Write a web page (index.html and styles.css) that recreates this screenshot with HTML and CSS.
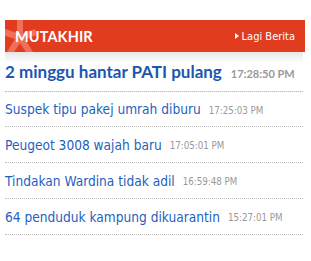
FILE: index.html
```html
<!DOCTYPE html>
<html>
<head>
<meta charset="utf-8">
<link rel="stylesheet" href="styles.css">
</head>
<body>
<div class="box">
  <div class="head">
    <svg class="star" width="40" height="32" viewBox="0 0 40 32" aria-hidden="true">
      <path fill="#ee7058" d="M12 0 H18 V13 L30 9 L32 15 L20 19 L28 32 H21 L15 23 L9 32 H2 L10 19 L-2 15 L0 9 L12 13 Z"/>
    </svg>
    <span class="title">MUTAKHIR</span>
    <a class="more" href="#"><span class="tri"></span>Lagi Berita</a>
  </div>
  <ul class="list">
    <li class="item top"><a href="#">2 minggu hantar PATI pulang</a><span class="time">17:28:50 PM</span></li>
    <li class="item second"><a href="#">Suspek tipu pakej umrah diburu</a><span class="time">17:25:03 PM</span></li>
    <li class="item"><a href="#">Peugeot 3008 wajah baru</a><span class="time">17:05:01 PM</span></li>
    <li class="item"><a href="#">Tindakan Wardina tidak adil</a><span class="time">16:59:48 PM</span></li>
    <li class="item"><a href="#">64 penduduk kampung dikuarantin</a><span class="time">15:27:01 PM</span></li>
  </ul>
</div>
</body>
</html>
```

FILE: styles.css
```css
html, body { margin: 0; padding: 0; background: #fff; }
.box { margin: 20px 0 0 5px; width: 300px; }
.head {
  position: relative;
  height: 32px;
  background: #e23c1e;
  display: flex;
  align-items: center;
  justify-content: space-between;
  overflow: hidden;
  padding: 0 10px 0 10px;
}
.star { position: absolute; left: 0; top: 0; display: block; }
.title {
  position: relative;
  color: #fff;
  font-family: "Lato", sans-serif;
  font-weight: 700;
  font-size: 14.5px;
  letter-spacing: 0.1px;
}
.more {
  position: relative;
  color: #fff;
  text-decoration: none;
  font-family: "DejaVu Sans Condensed", "DejaVu Sans", sans-serif;
  font-size: 11px;
  display: flex;
  align-items: center;
}
.tri {
  width: 0; height: 0;
  border-left: 4px solid #fff;
  border-top: 3.5px solid transparent;
  border-bottom: 3.5px solid transparent;
  margin-right: 3px;
}
.list { list-style: none; margin: 0; padding: 0; width: 298px; }
.item {
  display: flex;
  height: 36px;
  align-items: center;
  border-bottom: 1px dotted #bbb;
  white-space: nowrap;
  box-sizing: border-box;
}
.item.second { height: 35px; }
.item a {
  color: #1f5fbf;
  text-decoration: none;
  font-family: "DejaVu Sans Condensed", "DejaVu Sans", sans-serif;
  font-size: 13.6px;
}
.time {
  margin-left: 8px;
  color: #999;
  font-family: "DejaVu Sans Condensed", "DejaVu Sans", sans-serif;
  font-size: 9.7px;
  position: relative;
  top: 1px;
}
.item.top {
  height: 40px;
  background: linear-gradient(#e6e6e6, #fff 11px);
  align-items: flex-end;
  padding-bottom: 9px;
}
.item.top a {
  font-family: "Lato", sans-serif;
  font-weight: 700;
  font-size: 17px;
  color: #1a57b0;
}
.item.top .time {
  font-family: "Lato", sans-serif;
  font-weight: 700;
  font-size: 11px;
  margin-left: 9px;
  top: -2px;
}
```
